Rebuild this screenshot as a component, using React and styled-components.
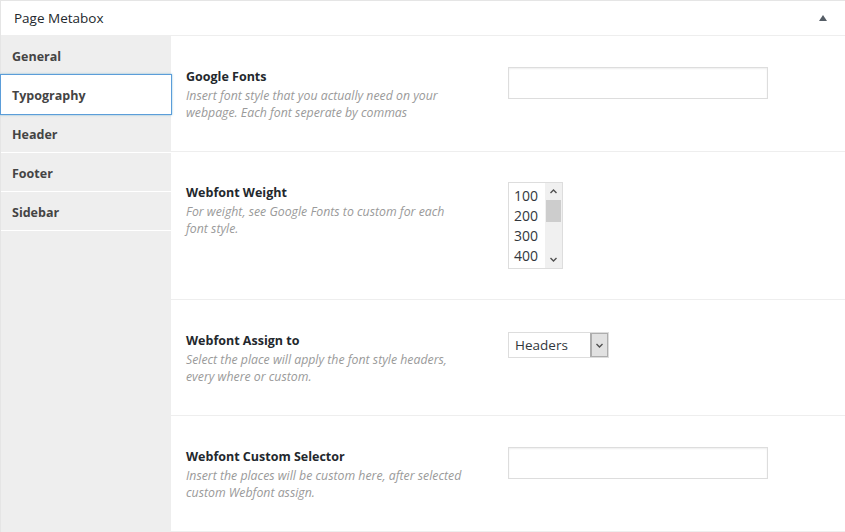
import React from 'react';
import styled, { createGlobalStyle } from 'styled-components';

const GlobalStyle = createGlobalStyle`
  html, body {
    margin: 0;
    padding: 0;
    background: #fff;
    overflow: hidden;
  }
  body {
    font-family: 'Open Sans', 'Noto Sans', sans-serif;
    color: #23282d;
  }
`;

const Box = styled.div`
  width: 846px;
  border: 1px solid #e5e5e5;
  background: #fff;
  box-sizing: border-box;
`;

const BoxHeader = styled.div`
  display: flex;
  align-items: center;
  justify-content: space-between;
  height: 34px;
  padding: 0 13px;
  border-bottom: 1px solid #eee;
  font-size: 13.5px;
  color: #23282d;
`;

const Toggle = styled.span`
  width: 0;
  height: 0;
  margin-right: 5px;
  border-left: 4px solid transparent;
  border-right: 4px solid transparent;
  border-bottom: 6px solid #555d66;
`;

const Body = styled.div`
  display: flex;
`;

const Tabs = styled.ul`
  list-style: none;
  margin: 0;
  padding: 0;
  width: 170px;
  flex-shrink: 0;
  background: #eee;
`;

const Tab = styled.li`
  display: flex;
  align-items: center;
  padding: 2px 11px 0;
  box-sizing: border-box;
  height: 39px;
  font-size: 12.5px;
  font-weight: 700;
  color: #444;
  border-bottom: 1px solid #fff;
  background: ${(p) => (p.$active ? '#fff' : 'transparent')};
  box-shadow: ${(p) =>
    p.$active ? '0 0 0 1px #5b9dd9, 0 0 2px 1px rgba(30, 140, 190, 0.5)' : 'none'};
  position: ${(p) => (p.$active ? 'relative' : 'static')};
`;

const Fields = styled.div`
  flex: 1;
`;

const Row = styled.div`
  display: flex;
  gap: 32px;
  padding: 31px 15px 30px;
  border-bottom: 1px solid #eee;
`;

const Label = styled.div`
  width: 290px;
  flex-shrink: 0;
`;

const Title = styled.div`
  font-size: 12.5px;
  font-weight: 700;
  line-height: 20px;
  color: #23282d;
`;

const Desc = styled.div`
  font-size: 12.3px;
  font-style: italic;
  line-height: 17px;
  color: #9a9a9a;
`;

const TextInput = styled.div`
  width: 260px;
  height: 32px;
  box-sizing: border-box;
  border: 1px solid #ddd;
  box-shadow: inset 0 1px 2px rgba(0, 0, 0, 0.07);
  background: #fff;
`;

const ListBox = styled.div`
  display: flex;
  width: 55px;
  height: 87px;
  margin-top: -1px;
  box-sizing: border-box;
  border: 1px solid #ddd;
  background: #fff;
`;

const Options = styled.div`
  flex: 1;
  padding: 3px 0 0 5px;
  font-size: 14px;
  line-height: 20px;
  color: #32373c;
  overflow: hidden;
`;

const ScrollBar = styled.div`
  width: 17px;
  display: flex;
  flex-direction: column;
  align-items: center;
  background: #f0f0f0;
`;

const ScrollArrow = styled.svg`
  width: 17px;
  height: 17px;
  flex-shrink: 0;
`;

const Track = styled.div`
  flex: 1;
  width: 100%;
`;

const Thumb = styled.div`
  width: 15px;
  height: 22px;
  margin: 0 auto;
  background: #cdcdcd;
`;

const Select = styled.div`
  display: flex;
  width: 101px;
  height: 26px;
  margin-top: 1px;
  box-sizing: border-box;
  border: 1px solid #ddd;
  background: #fff;
`;

const SelectValue = styled.div`
  flex: 1;
  padding-left: 6px;
  font-size: 13.5px;
  line-height: 24px;
  color: #32373c;
`;

const SelectButton = styled.div`
  width: 17px;
  display: flex;
  align-items: center;
  justify-content: center;
  background: #e1e1e1;
  border-left: 1px solid #adadad;
  box-shadow: inset 0 0 0 1px #adadad;
`;

const Chevron = ({ up }) => (
  <ScrollArrow viewBox="0 0 17 17">
    <path
      d={up ? 'M5.5 10 L8.5 7 L11.5 10' : 'M5.5 7 L8.5 10 L11.5 7'}
      fill="none"
      stroke="#505050"
      strokeWidth="1.4"
    />
  </ScrollArrow>
);

const tabs = ['General', 'Typography', 'Header', 'Footer', 'Sidebar'];

const Field = ({ title, desc, children }) => (
  <Row>
    <Label>
      <Title>{title}</Title>
      <Desc>{desc}</Desc>
    </Label>
    {children}
  </Row>
);

const App = () => {
  return (
    <>
      <GlobalStyle />
      <Box>
        <BoxHeader>
          <span>Page Metabox</span>
          <Toggle />
        </BoxHeader>
        <Body>
          <Tabs>
            {tabs.map((t) => (
              <Tab key={t} $active={t === 'Typography'}>
                {t}
              </Tab>
            ))}
          </Tabs>
          <Fields>
            <Field
              title="Google Fonts"
              desc={
                <>
                  Insert font style that you actually need on your
                  <br />
                  webpage. Each font seperate by commas
                </>
              }
            >
              <TextInput />
            </Field>
            <Field
              title="Webfont Weight"
              desc={
                <>
                  For weight, see Google Fonts to custom for each
                  <br />
                  font style.
                </>
              }
            >
              <ListBox>
                <Options>
                  <div>100</div>
                  <div>200</div>
                  <div>300</div>
                  <div>400</div>
                </Options>
                <ScrollBar>
                  <Chevron up />
                  <Track>
                    <Thumb />
                  </Track>
                  <Chevron />
                </ScrollBar>
              </ListBox>
            </Field>
            <Field
              title="Webfont Assign to"
              desc={
                <>
                  Select the place will apply the font style headers,
                  <br />
                  every where or custom.
                </>
              }
            >
              <Select>
                <SelectValue>Headers</SelectValue>
                <SelectButton>
                  <Chevron />
                </SelectButton>
              </Select>
            </Field>
            <Field
              title="Webfont Custom Selector"
              desc={
                <>
                  Insert the places will be custom here, after selected
                  <br />
                  custom Webfont assign.
                </>
              }
            >
              <TextInput />
            </Field>
          </Fields>
        </Body>
      </Box>
    </>
  );
};

export default App;
